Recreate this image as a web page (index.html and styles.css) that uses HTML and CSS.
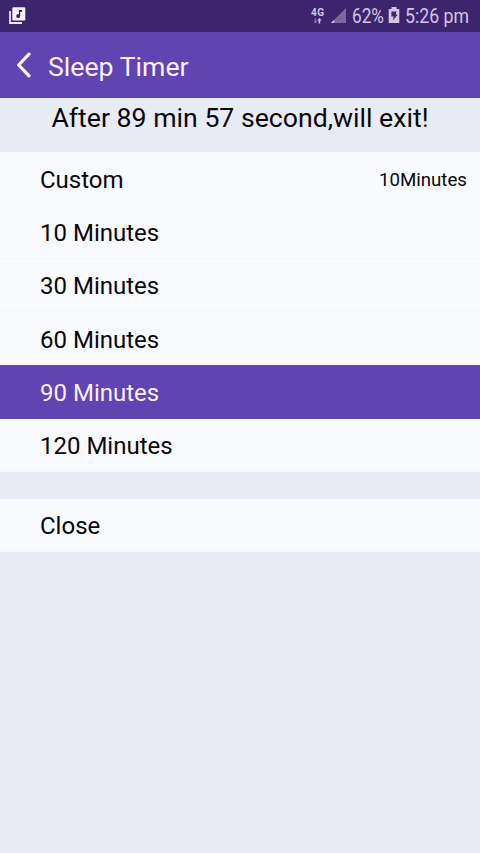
FILE: index.html
```html
<!DOCTYPE html>
<html lang="en">
<head>
<meta charset="utf-8">
<title>Sleep Timer</title>
<link rel="stylesheet" href="styles.css">
</head>
<body>
<div class="status">
  <svg class="note" width="17" height="17" viewBox="0 0 17 17">
    <path d="M1 4v12h12" fill="none" stroke="#eee8f8" stroke-width="1.8"/>
    <rect x="3.3" y="0.3" width="13" height="13.2" rx="1.3" fill="#f5f0fb"/>
    <path d="M9.900 3h3.200v1.900h-1.900v4.200a2 2 0 1 1-1.300-1.900z" fill="#3c256c"/>
  </svg>
  <svg class="tray" width="170" height="32" viewBox="0 0 170 32">
    <g fill="#d3c5e6">
      <text class="net" x="1" y="16" textLength="13">4G</text>
      <path d="M5.400 23.500l-2-2.300h1.300V18.500h1.400v2.700h1.300z" opacity=".5"/>
      <path d="M9.400 18l2.200 2.600h-1.400v2.900H8.600v-2.900H7.200z"/>
      <path d="M36 8v15H21z" opacity=".42"/>
      <path d="M24.200 19.800V23H21z"/>
      <text class="info" x="42" y="23" textLength="32" lengthAdjust="spacingAndGlyphs">62%</text>
      <path d="M81.500 7h5v2h2.800v14H78.700V9h2.800z"/>
      <text class="info" x="95" y="23" textLength="64" lengthAdjust="spacingAndGlyphs">5:26 pm</text>
    </g>
    <path d="M81.500 11.500h5l-.7 3h2l-5 6 1-4h-2.500z" fill="#3c256c"/>
  </svg>
</div>
<header class="bar">
  <svg class="back" width="16" height="26" viewBox="0 0 16 26">
    <path d="M13 2.200L2.700 13 13 23.800" fill="none" stroke="#fdf5ff" stroke-width="3.200" stroke-linecap="round" stroke-linejoin="round"/>
  </svg>
  <h1 class="title">Sleep Timer</h1>
</header>
<p class="countdown">After 89 min 57 second,will exit!</p>
<ul class="list">
  <li class="row"><span>Custom</span><span class="value">10Minutes</span></li>
  <li class="row">10 Minutes</li>
  <li class="row">30 Minutes</li>
  <li class="row">60 Minutes</li>
  <li class="row selected">90 Minutes</li>
  <li class="row">120 Minutes</li>
</ul>
<ul class="list close">
  <li class="row">Close</li>
</ul>
</body>
</html>
```
FILE: styles.css
```css
* { box-sizing: border-box; }
body {
  margin: 0;
  min-height: 853px;
  background: #e9ebf4;
  color: #08080c;
  font-family: Roboto, sans-serif;
  overflow: hidden;
}
.status {
  height: 32px;
  padding: 0 0 0 9px;
  display: flex;
  justify-content: space-between;
  background: #3c256c;
}
.note { margin-top: 7px; }
.net { font-size: 10px; font-weight: 700; }
.info { font-size: 20px; }
.bar {
  height: 66px;
  padding: 2px 0 0 16px;
  display: flex;
  align-items: center;
  background: #6045b2;
}
.back { margin-top: -2px; }
.title {
  margin: 2px 0 0 16px;
  font-size: 26.67px;
  line-height: 32px;
  font-weight: 400;
  color: #fbeeff;
}
.countdown {
  height: 54px;
  margin: 0;
  padding-top: 4px;
  font-size: 26.67px;
  line-height: 32px;
  text-align: center;
}
.list {
  margin: 0;
  padding: 0;
  list-style: none;
  background: #f9fafd;
}
.close { margin-top: 26.67px; }
.row {
  height: 53.33px;
  padding: 3px 13px 0 40px;
  display: flex;
  align-items: center;
  justify-content: space-between;
  font-size: 24px;
  border-bottom: 1px solid #f5f6fa;
}
.value { font-size: 18.67px; }
.selected {
  background: #6045b2;
  border-color: #6045b2;
  color: #fbeeff;
}
```
